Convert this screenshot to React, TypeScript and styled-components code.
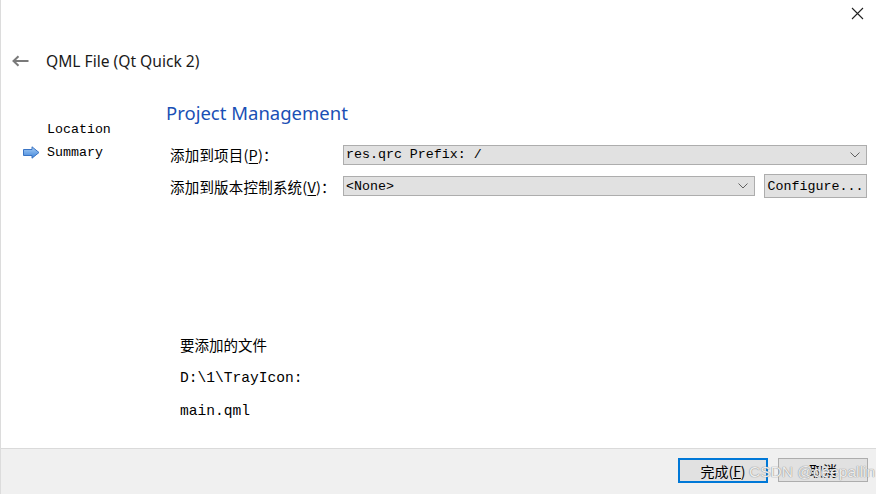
import styled, { createGlobalStyle } from 'styled-components';

const Global = createGlobalStyle`
  html, body {
    margin: 0;
    padding: 0;
    background: #fff;
  }
  * { box-sizing: border-box; }
`;

const Window = styled.div`
  position: relative;
  width: 876px;
  height: 494px;
  display: flex;
  flex-direction: column;
  background: #fff;
  border-left: 1px solid #dcdcdc;
  overflow: hidden;
`;

const TopBar = styled.div`
  height: 30px;
  display: flex;
  justify-content: flex-end;
  align-items: flex-start;
  padding: 7px 12px 0 0;
`;

const TitleRow = styled.div`
  margin-top: 16px;
  height: 30px;
  display: flex;
  align-items: center;
  gap: 17px;
  padding-left: 11px;
`;

const Title = styled.div`
  font-family: 'Noto Sans', 'Open Sans', sans-serif;
  font-size: 15.6px;
  color: #1a1a1a;
`;

const Body = styled.div`
  flex: 1;
  display: flex;
  padding-top: 16px;
`;

const Sidebar = styled.ul`
  width: 165px;
  margin: 0;
  padding: 26px 0 0 0;
  list-style: none;
`;

const Step = styled.li<{ $active?: boolean }>`
  height: 23px;
  display: flex;
  align-items: center;
  gap: 7px;
  padding-left: ${(p) => (p.$active ? '22px' : '46px')};
  font-family: 'Liberation Mono', 'DejaVu Sans Mono', monospace;
  font-size: 13.3px;
  color: #000;
`;

const Main = styled.div`
  flex: 1;
  display: flex;
  flex-direction: column;
  padding-right: 9px;
`;

const Heading = styled.h1`
  margin: 9px 0 0 0;
  font-family: 'Noto Sans', 'Open Sans', sans-serif;
  font-weight: 400;
  font-size: 18.5px;
  line-height: 24px;
  color: #1a4fb5;
`;

const Form = styled.div`
  margin-top: 19px;
  padding-left: 4px;
  display: grid;
  grid-template-columns: 173px 1fr;
  row-gap: 9px;
  align-items: center;
`;

const Label = styled.label`
  font-family: 'Noto Sans CJK SC', 'Noto Sans', sans-serif;
  font-size: 14.5px;
  letter-spacing: 0.2px;
  white-space: nowrap;
  color: #000;
  u {
    text-decoration: underline;
    text-underline-offset: 2px;
  }
`;

const Line = styled.div`
  display: flex;
  gap: 9px;
  align-items: center;
`;

const Combo = styled.div`
  flex: 1;
  height: 20px;
  display: flex;
  align-items: center;
  justify-content: space-between;
  padding: 0 6px 0 2px;
  background: #e1e1e1;
  border: 1px solid #adadad;
  font-family: 'Liberation Mono', 'DejaVu Sans Mono', monospace;
  font-size: 13.3px;
  color: #000;
`;

const Button = styled.button<{ $default?: boolean }>`
  height: ${(p) => (p.$default ? '25px' : '24px')};
  padding: 0;
  background: #e1e1e1;
  border: ${(p) => (p.$default ? '2px solid #0078d7' : '1px solid #adadad')};
  font-family: 'Liberation Mono', 'Noto Sans CJK SC', monospace;
  font-size: 13.3px;
  color: #000;
`;

const ConfigureButton = styled(Button)`
  width: 103px;
`;

const Files = styled.div`
  margin-top: 135px;
  padding-left: 14px;
  display: flex;
  flex-direction: column;
`;

const FilesTitle = styled.div`
  font-family: 'Noto Sans CJK SC', 'Noto Sans', sans-serif;
  font-size: 14.5px;
  line-height: 24px;
  color: #000;
`;

const FileLine = styled.div`
  margin-top: 9px;
  font-family: 'Liberation Mono', 'Courier New', monospace;
  font-size: 14.6px;
  line-height: 24px;
  color: #000;
  & + & {
    margin-top: 9px;
  }
`;

const Footer = styled.div`
  height: 46px;
  display: flex;
  justify-content: flex-end;
  align-items: flex-start;
  gap: 10px;
  padding: 9px 8px 0 0;
  background: #f0f0f0;
  border-top: 1px solid #dadada;
`;

const FooterButton = styled(Button)`
  width: 90px;
  font-family: 'Noto Sans CJK SC', 'Noto Sans', sans-serif;
  font-size: 14px;
`;

const Watermark = styled.div`
  position: absolute;
  right: 1px;
  bottom: 13px;
  font-family: 'Liberation Sans', Arial, sans-serif;
  font-size: 15.5px;
  color: rgba(255, 255, 255, 0.85);
  text-shadow: 0 0 1px #888, 0 0 1px #999;
  pointer-events: none;
`;

const Chevron = () => (
  <svg width="10" height="6" viewBox="0 0 10 6">
    <path d="M0.5 0.5 L5 5 L9.5 0.5" fill="none" stroke="#606060" strokeWidth="1" />
  </svg>
);

const BackArrow = () => (
  <svg width="17" height="12" viewBox="0 0 17 12">
    <path d="M16.5 6 H2 M6.5 1.2 L1.5 6 L6.5 10.8" fill="none" stroke="#7a7a7a" strokeWidth="2" />
  </svg>
);

const CloseIcon = () => (
  <svg width="13" height="13" viewBox="0 0 13 13">
    <path d="M1 1 L12 12 M12 1 L1 12" stroke="#222" strokeWidth="1.1" />
  </svg>
);

const StepArrow = () => (
  <svg width="17" height="13" viewBox="0 0 17 13">
    <defs>
      <linearGradient id="sa" x1="0" y1="0" x2="0" y2="1">
        <stop offset="0" stopColor="#a9cdf5" />
        <stop offset="1" stopColor="#3f86db" />
      </linearGradient>
    </defs>
    <path d="M0.5 3.5 H9 V0.8 L16 6.5 L9 12.2 V9.5 H0.5 Z" fill="url(#sa)" stroke="#3a74c4" strokeWidth="1" />
  </svg>
);

export default function App() {
  return (
    <>
      <Global />
      <Window>
        <TopBar>
          <CloseIcon />
        </TopBar>
        <TitleRow>
          <BackArrow />
          <Title>QML File (Qt Quick 2)</Title>
        </TitleRow>
        <Body>
          <Sidebar>
            <Step>Location</Step>
            <Step $active>
              <StepArrow />
              Summary
            </Step>
          </Sidebar>
          <Main>
            <Heading>Project Management</Heading>
            <Form>
              <Label>
                添加到项目(<u>P</u>)：
              </Label>
              <Line>
                <Combo>
                  res.qrc Prefix: /
                  <Chevron />
                </Combo>
              </Line>
              <Label>
                添加到版本控制系统(<u>V</u>)：
              </Label>
              <Line>
                <Combo>
                  &lt;None&gt;
                  <Chevron />
                </Combo>
                <ConfigureButton>Configure...</ConfigureButton>
              </Line>
            </Form>
            <Files>
              <FilesTitle>要添加的文件</FilesTitle>
              <FileLine>D:\1\TrayIcon:</FileLine>
              <FileLine>main.qml</FileLine>
            </Files>
          </Main>
        </Body>
        <Footer>
          <FooterButton $default>
            完成(<u>F</u>)
          </FooterButton>
          <FooterButton>取消</FooterButton>
        </Footer>
        <Watermark>CSDN @deepallin</Watermark>
      </Window>
    </>
  );
}
